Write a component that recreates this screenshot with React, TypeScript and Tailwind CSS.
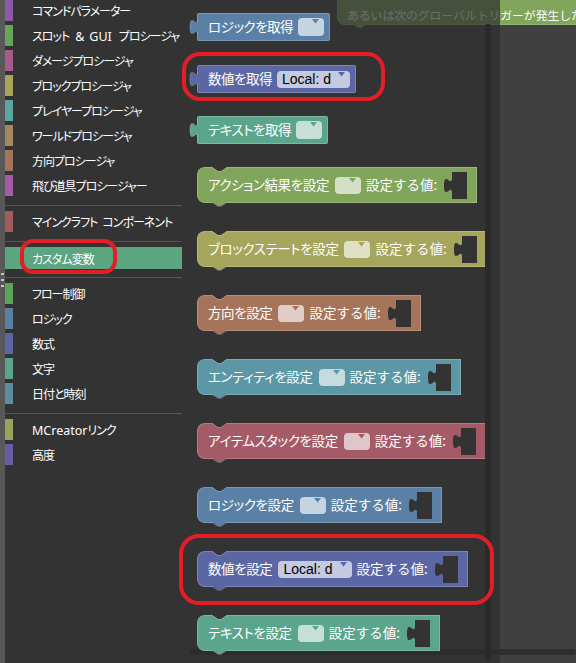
import React from "react";

type Cat = { label: React.ReactNode; key: string; bar: string };

const cats1: Cat[] = [
  { key: "cmd", label: "コマンドパラメーター", bar: "bg-[#8c5ba5]" },
  {
    key: "slot",
    label: (
      <>
        スロット
        <span className="ml-[6px] tracking-normal text-[12.5px]">&amp;</span>
        <span className="ml-[5px] tracking-normal text-[12.5px]">GUI</span>
        <span className="ml-[7px]">プロシージャ</span>
      </>
    ),
    bar: "bg-[#66a55b]",
  },
  { key: "dmg", label: "ダメージプロシージャ", bar: "bg-[#a55b8e]" },
  { key: "blk", label: "ブロックプロシージャ", bar: "bg-[#a5a55b]" },
  { key: "ply", label: "プレイヤープロシージャ", bar: "bg-[#5ba5a5]" },
  { key: "wld", label: "ワールドプロシージャ", bar: "bg-[#a5895b]" },
  { key: "dir", label: "方向プロシージャ", bar: "bg-[#a5745b]" },
  { key: "prj", label: "飛び道具プロシージャー", bar: "bg-[#a55ba5]" },
];
const cats2: Cat[] = [
  {
    key: "mc",
    label: (
      <>
        マインクラフト<span className="ml-[5px]">コンポーネント</span>
      </>
    ),
    bar: "bg-[#a55b5b]",
  },
];
const cats3: Cat[] = [
  { key: "flow", label: "フロー制御", bar: "bg-[#5ba55b]" },
  { key: "logic", label: "ロジック", bar: "bg-[#5b80a5]" },
  { key: "math", label: "数式", bar: "bg-[#5b67a5]" },
  { key: "text", label: "文字", bar: "bg-[#5ba58c]" },
  { key: "date", label: "日付と時刻", bar: "bg-[#5b8ca0]" },
];
const cats4: Cat[] = [
  {
    key: "link",
    label: (
      <>
        <span className="tracking-normal text-[12.5px]">MCreator</span>リンク
      </>
    ),
    bar: "bg-[#94a55b]",
  },
  { key: "adv", label: "高度", bar: "bg-[#6a5ba5]" },
];

function Row({ c }: { c: Cat }) {
  return (
    <div className="flex h-[21px] mb-[4px] items-center">
      <div className={`w-[8px] h-full shrink-0 ${c.bar}`} />
      <span className="ml-[19px] pt-[3px] text-white text-[12px] tracking-[-1px] leading-none whitespace-nowrap">{c.label}</span>
    </div>
  );
}

function Sep() {
  return <div className="h-px bg-[#555555] mt-[5px] mb-[5px]" />;
}

function Arrow({ hex }: { hex: string }) {
  return (
    <svg className="absolute right-[5px] top-[1px]" width="7" height="5" viewBox="0 0 7 5">
      <path d="M0,0 H7 L3.5,4.5 Z" fill={hex} />
    </svg>
  );
}

function Dd({ hex, big }: { hex: string; big?: boolean }) {
  return (
    <div className={`relative shrink-0 w-[26px] rounded-[4px] bg-white/65 ${big ? "h-[18px]" : "h-[17px]"}`}>
      <Arrow hex={hex} />
    </div>
  );
}

function LocalDd({ hex }: { hex: string }) {
  return (
    <div className="relative shrink-0 flex items-center h-[17px] pl-[5px] pr-[19px] rounded-[4px] bg-white/65">
      <span className="text-black text-[14px] leading-none font-['Liberation_Sans',sans-serif] [font-feature-settings:normal]">Local: d</span>
      <Arrow hex={hex} />
    </div>
  );
}

function OutputBlock({
  bg,
  hex,
  label,
  mt,
  children,
}: {
  bg: string;
  hex: string;
  label: string;
  mt: string;
  children: React.ReactNode;
}) {
  return (
    <div className={`relative flex items-center h-[28px] pl-[10px] pr-[5px] border border-white/20 rounded-[2px] ${bg} ${mt}`}>
      <svg className="absolute left-[-9px] top-[5px]" width="9" height="16" viewBox="0 0 9 16">
        <path d="M9,0.5 C9,10.5 1,-7.5 1,8 C1,23.5 9,5.5 9,15.5 Z" fill={hex} />
        <path d="M9,0.5 C9,10.5 1,-7.5 1,8 C1,23.5 9,5.5 9,15.5" fill="none" stroke="rgba(255,255,255,0.22)" strokeWidth="1" />
      </svg>
      <span className="pt-[1px] text-white text-[13.5px] tracking-[-0.5px] leading-none whitespace-nowrap mr-[5px]">{label}</span>
      {children}
    </div>
  );
}

function Slot() {
  return (
    <svg className="shrink-0 ml-[7px]" width="23" height="27" viewBox="0 0 23 27">
      <path d="M8,0 H23 V27 H8 V21 C8,11 0,29 0,13.5 C0,-2 8,16 8,6 Z" fill="#333333" />
    </svg>
  );
}

function StatementBlock({
  bg,
  hex,
  label,
  mt,
  local,
}: {
  bg: string;
  hex: string;
  label: string;
  mt: string;
  local?: boolean;
}) {
  return (
    <div className={`relative flex items-center h-[36px] pl-[10px] pr-[9px] border border-white/20 rounded-l-[8px] ${bg} ${mt}`}>
      <svg className="absolute left-[14px] top-[-1px]" width="15" height="6" viewBox="0 0 15 6">
        <path d="M0,0 L6,4 L9,4 L15,0 Z" fill="#333333" />
        <path d="M0,0.5 L6,4.5 L9,4.5 L15,0.5" fill="none" stroke="rgba(255,255,255,0.22)" strokeWidth="1" />
      </svg>
      <svg className="absolute left-[14px] bottom-[-5px]" width="15" height="5" viewBox="0 0 15 5">
        <path d="M0,0 L6,4 L9,4 L15,0 Z" fill={hex} />
        <path d="M0,0.5 L6,4.5 L9,4.5 L15,0.5" fill="none" stroke="rgba(255,255,255,0.22)" strokeWidth="1" />
      </svg>
      <span className="pt-[1px] text-white text-[13.5px] tracking-[-0.4px] leading-none whitespace-nowrap mr-[6px]">{label}</span>
      {local ? <LocalDd hex={hex} /> : <Dd hex={hex} />}
      <span className="pt-[1px] text-white text-[13.5px] leading-none whitespace-nowrap ml-[5px] [font-feature-settings:normal]">設定する値:</span>
      <Slot />
    </div>
  );
}

export default function App() {
  return (
    <div className="relative w-[576px] h-[663px] overflow-hidden flex bg-[#333333] font-['Noto_Sans','Noto_Sans_CJK_JP',sans-serif] [font-feature-settings:'palt']">
      {/* splitter strip */}
      <div className="relative w-[5px] shrink-0 h-full bg-[#585858]">
        <div className="absolute left-[1px] top-[273px] flex flex-col gap-[4px]">
          <div className="w-[3px] h-[2px] bg-[#c8c8c8]" />
          <div className="w-[3px] h-[2px] bg-[#c8c8c8]" />
          <div className="w-[3px] h-[2px] bg-[#c8c8c8]" />
        </div>
      </div>

      {/* toolbox */}
      <div className="w-[177px] shrink-0 h-full bg-[#333333] flex flex-col overflow-hidden">
        {cats1.map((c) => (
          <Row key={c.key} c={c} />
        ))}
        <Sep />
        {cats2.map((c) => (
          <Row key={c.key} c={c} />
        ))}
        <Sep />
        <div className="flex h-[22px] mb-[3px] items-center bg-[#5ba580]">
          <span className="ml-[27px] pt-[3px] text-white text-[12px] tracking-[-1px] leading-none whitespace-nowrap">カスタム変数</span>
        </div>
        <Sep />
        {cats3.map((c) => (
          <Row key={c.key} c={c} />
        ))}
        <Sep />
        {cats4.map((c) => (
          <Row key={c.key} c={c} />
        ))}
      </div>

      {/* workspace */}
      <div className="relative flex-1 h-full bg-[#404040] overflow-hidden">
        {/* workspace block (canvas item) */}
        <div className="absolute left-[155px] top-[-10px] h-[35px] w-[320px] bg-[#80a55b] border border-white/15 rounded-bl-[8px] flex items-center pl-[9px] pt-[14px]">
          <span className="text-white text-[11.8px] leading-none whitespace-nowrap font-['Noto_Sans_CJK_JP',sans-serif] [font-feature-settings:normal]">
            あるいは次のグローバルトリガーが発生したとき
          </span>
          <svg className="absolute left-[14px] bottom-[-5px]" width="15" height="5" viewBox="0 0 15 5">
            <path d="M0,0 L6,4 L9,4 L15,0 Z" fill="#80a55b" />
          </svg>
        </div>
        {/* horizontal scrollbar */}
        <div className="absolute left-[8px] right-0 top-[649px] h-[6px] bg-[#2e2e2e] rounded-full" />

        {/* flyout */}
        <div className="absolute left-0 top-0 w-[318px] h-full bg-[#2d2d2d]/70">
          <div className="flex flex-col items-start pt-[13px] pl-[15px]">
            <OutputBlock bg="bg-[#5b80a5]" hex="#5b80a5" label="ロジックを取得" mt="mt-0">
              <Dd hex="#5b80a5" big />
            </OutputBlock>
            <OutputBlock bg="bg-[#5b67a5]" hex="#5b67a5" label="数値を取得" mt="mt-[24px]">
              <LocalDd hex="#5b67a5" />
            </OutputBlock>
            <OutputBlock bg="bg-[#5ba58c]" hex="#5ba58c" label="テキストを取得" mt="mt-[23px]">
              <Dd hex="#5ba58c" big />
            </OutputBlock>

            <StatementBlock bg="bg-[#80a55b]" hex="#80a55b" label="アクション結果を設定" mt="mt-[23px]" />
            <StatementBlock bg="bg-[#a5a55b]" hex="#a5a55b" label="ブロックステートを設定" mt="mt-[28px]" />
            <StatementBlock bg="bg-[#a5745b]" hex="#a5745b" label="方向を設定" mt="mt-[28px]" />
            <StatementBlock bg="bg-[#5b97a5]" hex="#5b97a5" label="エンティティを設定" mt="mt-[28px]" />
            <StatementBlock bg="bg-[#a55b67]" hex="#a55b67" label="アイテムスタックを設定" mt="mt-[28px]" />
            <StatementBlock bg="bg-[#5b80a5]" hex="#5b80a5" label="ロジックを設定" mt="mt-[28px]" />
            <StatementBlock bg="bg-[#5b67a5]" hex="#5b67a5" label="数値を設定" mt="mt-[28px]" local />
            <StatementBlock bg="bg-[#5ba58c]" hex="#5ba58c" label="テキストを設定" mt="mt-[28px]" />
          </div>
          {/* flyout scrollbar */}
          <div className="absolute left-[303px] top-[24px] w-[6px] h-[637px] bg-[#2a2a2a] rounded-full" />
        </div>
      </div>

      {/* red annotations */}
      <div className="absolute left-[20px] top-[239px] w-[97px] h-[35px] border-[4px] border-[#e41e26] rounded-[13px]" />
      <div className="absolute left-[182px] top-[52px] w-[203px] h-[49px] border-[4px] border-[#e41e26] rounded-[18px]" />
      <div className="absolute left-[179px] top-[534px] w-[315px] h-[71px] border-[4px] border-[#e41e26] rounded-[20px]" />
    </div>
  );
}
